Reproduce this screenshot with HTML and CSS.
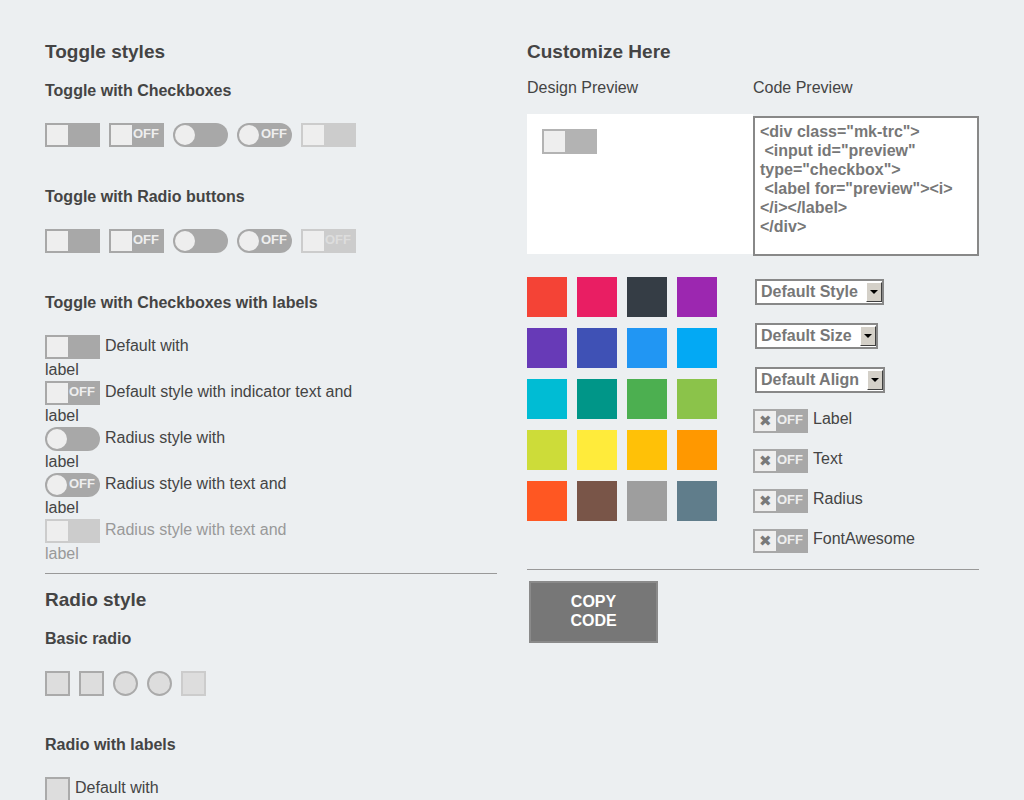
FILE: index.html
```html
<!DOCTYPE html>
<html>
<head>
<meta charset="utf-8">
<link rel="stylesheet" href="styles.css">
</head>
<body>
<div class="page">
  <div class="col">
    <h2 class="h2">Toggle styles</h2>
    <h3 class="h3">Toggle with Checkboxes</h3>
    <div class="trow">
      <span class="tg"><span class="kn"></span></span>
      <span class="tg"><span class="kn"></span><span class="off">OFF</span></span>
      <span class="tg rd"><span class="kn"></span></span>
      <span class="tg rd"><span class="kn"></span><span class="off">OFF</span></span>
      <span class="tg dis"><span class="kn"></span></span>
    </div>
    <h3 class="h3">Toggle with Radio buttons</h3>
    <div class="trow">
      <span class="tg"><span class="kn"></span></span>
      <span class="tg"><span class="kn"></span><span class="off">OFF</span></span>
      <span class="tg rd"><span class="kn"></span></span>
      <span class="tg rd"><span class="kn"></span><span class="off">OFF</span></span>
      <span class="tg dis"><span class="kn"></span><span class="off">OFF</span></span>
    </div>
    <h3 class="h3">Toggle with Checkboxes with labels</h3>
    <div class="lrows">
      <div class="lrow"><div class="l1"><span class="tg"><span class="kn"></span></span><span class="lt">Default with</span></div><div class="l2">label</div></div>
      <div class="lrow"><div class="l1"><span class="tg"><span class="kn"></span><span class="off">OFF</span></span><span class="lt">Default style with indicator text and</span></div><div class="l2">label</div></div>
      <div class="lrow"><div class="l1"><span class="tg rd"><span class="kn"></span></span><span class="lt">Radius style with</span></div><div class="l2">label</div></div>
      <div class="lrow"><div class="l1"><span class="tg rd"><span class="kn"></span><span class="off">OFF</span></span><span class="lt">Radius style with text and</span></div><div class="l2">label</div></div>
      <div class="lrow dimmed"><div class="l1"><span class="tg dis"><span class="kn"></span></span><span class="lt">Radius style with text and</span></div><div class="l2">label</div></div>
    </div>
    <div class="hr hr-left"></div>
    <h2 class="h2 h2-radio">Radio style</h2>
    <h3 class="h3">Basic radio</h3>
    <div class="rrow">
      <span class="rb"></span>
      <span class="rb"></span>
      <span class="rb rc"></span>
      <span class="rb rc"></span>
      <span class="rb rdis"></span>
    </div>
    <h3 class="h3">Radio with labels</h3>
    <div class="lrow"><div class="l1"><span class="rb"></span><span class="lt">Default with</span></div></div>
  </div>

  <div class="col">
    <h2 class="h2">Customize Here</h2>
    <div class="pv-heads">
      <div class="pv-label">Design Preview</div>
      <div class="pv-label">Code Preview</div>
    </div>
    <div class="pv">
      <div class="pv-design"><span class="tg pvt"><span class="kn"></span></span></div>
      <div class="pv-code"><div class="code">&lt;div class="mk-trc"&gt;
 &lt;input id="preview"
type="checkbox"&gt;
 &lt;label for="preview"&gt;&lt;i&gt;
&lt;/i&gt;&lt;/label&gt;
&lt;/div&gt;</div></div>
    </div>
    <div class="opts">
      <div class="swatches">
        <span class="sw" style="background:#f44336"></span>
        <span class="sw" style="background:#e91e63"></span>
        <span class="sw" style="background:#353d45"></span>
        <span class="sw" style="background:#9c27b0"></span>
        <span class="sw" style="background:#673ab7"></span>
        <span class="sw" style="background:#3f51b5"></span>
        <span class="sw" style="background:#2196f3"></span>
        <span class="sw" style="background:#03a9f4"></span>
        <span class="sw" style="background:#00bcd4"></span>
        <span class="sw" style="background:#009688"></span>
        <span class="sw" style="background:#4caf50"></span>
        <span class="sw" style="background:#8bc34a"></span>
        <span class="sw" style="background:#cddc39"></span>
        <span class="sw" style="background:#ffeb3b"></span>
        <span class="sw" style="background:#ffc107"></span>
        <span class="sw" style="background:#ff9800"></span>
        <span class="sw" style="background:#ff5722"></span>
        <span class="sw" style="background:#795548"></span>
        <span class="sw" style="background:#9e9e9e"></span>
        <span class="sw" style="background:#607d8b"></span>
      </div>
      <div class="controls">
        <div class="sel"><span class="sel-t">Default Style</span><span class="sel-b"><span class="arr"></span></span></div>
        <div class="sel"><span class="sel-t">Default Size</span><span class="sel-b"><span class="arr"></span></span></div>
        <div class="sel sel-last"><span class="sel-t">Default Align</span><span class="sel-b"><span class="arr"></span></span></div>
        <div class="xrow"><span class="tg"><span class="kn xk">✖</span><span class="off">OFF</span></span><span class="xt">Label</span></div>
        <div class="xrow"><span class="tg"><span class="kn xk">✖</span><span class="off">OFF</span></span><span class="xt">Text</span></div>
        <div class="xrow"><span class="tg"><span class="kn xk">✖</span><span class="off">OFF</span></span><span class="xt">Radius</span></div>
        <div class="xrow"><span class="tg"><span class="kn xk">✖</span><span class="off">OFF</span></span><span class="xt">FontAwesome</span></div>
      </div>
    </div>
    <div class="hr hr-right"></div>
    <div class="btn">COPY<br>CODE</div>
  </div>
</div>
</body>
</html>
```

FILE: styles.css
```css
html, body {
  margin: 0;
  padding: 0;
  overflow: hidden;
  background: #eceff1;
}
body {
  font-family: "Liberation Sans", Arial, sans-serif;
  color: #444;
}
.page {
  display: grid;
  grid-template-columns: 452px 452px;
  column-gap: 30px;
  align-items: start;
  padding: 41px 45px 0 45px;
  height: 759px;
}
.col {
  display: flex;
  flex-direction: column;
  align-items: flex-start;
}
.h2 {
  margin: 0;
  font-size: 19px;
  line-height: 22px;
  font-weight: bold;
  color: #444;
}
.h3 {
  margin: 18px 0 22px 0;
  font-size: 16px;
  line-height: 20px;
  font-weight: bold;
  color: #444;
}
.trow + .h3 {
  margin-top: 40px;
}
.rrow + .h3 {
  margin-top: 39px;
}
.trow {
  display: flex;
  gap: 9px;
}
.tg {
  box-sizing: border-box;
  display: flex;
  width: 55px;
  height: 24px;
  padding: 2px;
  background: #a8a8a8;
  flex: none;
}
.kn {
  width: 21px;
  height: 20px;
  background: #eeeeee;
  flex: none;
}
.off {
  margin-left: auto;
  margin-right: 3px;
  font-size: 13px;
  line-height: 17px;
  font-weight: bold;
  color: #eeeeee;
}
.tg.rd {
  border-radius: 12px;
}
.tg.rd .kn {
  width: 20px;
  border-radius: 50%;
}
.tg.dis {
  background: #cccccc;
}
.tg.dis .kn {
  background: #eeeeee;
}
.tg.dis .off {
  color: #dddddd;
}
.lrows {
  display: flex;
  flex-direction: column;
}
.lrow {
  display: flex;
  flex-direction: column;
  height: 46px;
  font-size: 16px;
}
.l1 {
  display: flex;
  align-items: flex-start;
  height: 24px;
}
.lt {
  margin-left: 5px;
  padding-top: 1px;
  line-height: 20px;
}
.l2 {
  line-height: 22px;
}
.dimmed {
  color: #999;
}
.hr {
  width: 100%;
  border-top: 1px solid #999;
}
.hr-left {
  margin-top: 8px;
}
.h2-radio {
  margin-top: 15px;
}
.rrow {
  display: flex;
  gap: 9px;
}
.rb {
  box-sizing: border-box;
  width: 25px;
  height: 25px;
  border: 2px solid #aaaaaa;
  background: #dddddd;
  flex: none;
}
.rb.rc {
  border-radius: 50%;
}
.rb.rdis {
  border-color: #cccccc;
}

/* right column */
.pv-heads {
  display: grid;
  grid-template-columns: 226px 226px;
  margin-top: 15px;
}
.pv-label {
  font-size: 16px;
  line-height: 20px;
  color: #444;
}
.pv {
  display: grid;
  grid-template-columns: 226px 226px;
  margin-top: 16px;
  align-items: start;
}
.pv-design {
  background: #ffffff;
  height: 140px;
  padding: 15px;
  box-sizing: border-box;
}
.tg.pvt {
  height: 25px;
  background: #b3b3b3;
}
.tg.pvt .kn {
  height: 21px;
}
.pv-code {
  box-sizing: border-box;
  height: 140px;
  margin-top: 2px;
  background: #fff;
  border: 2px solid #888;
  padding: 4px 5px;
}
.code {
  white-space: pre;
  font-size: 16px;
  line-height: 19px;
  font-weight: bold;
  color: #777;
}
.opts {
  display: grid;
  grid-template-columns: 226px 226px;
  align-items: start;
  margin-top: 21px;
}
.swatches {
  display: grid;
  grid-template-columns: repeat(4, 40px);
  grid-auto-rows: 40px;
  align-content: start;
  column-gap: 10px;
  row-gap: 11px;
}
.sw {
  width: 40px;
  height: 40px;
}
.controls {
  display: flex;
  flex-direction: column;
  align-items: flex-start;
}
.sel {
  box-sizing: border-box;
  display: flex;
  align-items: center;
  height: 26px;
  margin-left: 2px;
  margin-bottom: 18px;
  border: 2px solid #888;
  background: #fff;
  padding-left: 4px;
}
.sel:first-child {
  margin-top: 2px;
}
.sel.sel-last {
  margin-bottom: 16px;
}
.sel-t {
  font-size: 16px;
  font-weight: bold;
  color: #777;
  line-height: 20px;
}
.sel-b {
  box-sizing: border-box;
  display: flex;
  align-items: center;
  justify-content: center;
  width: 16px;
  height: 20px;
  margin-left: 8px;
  background: #d4d0c8;
  border-top: 1px solid #fff;
  border-left: 1px solid #fff;
  border-right: 1px solid #404040;
  border-bottom: 1px solid #404040;
}
.arr {
  width: 0;
  height: 0;
  border-left: 4px solid transparent;
  border-right: 4px solid transparent;
  border-top: 4px solid #000;
}
.xrow {
  display: flex;
  align-items: flex-start;
  height: 24px;
  margin-bottom: 16px;
}
.xk {
  display: flex;
  align-items: center;
  justify-content: center;
  font-size: 15px;
  color: #7a7a7a;
  line-height: 20px;
}
.xt {
  margin-left: 5px;
  font-size: 16px;
  line-height: 20px;
  color: #444;
}
.hr-right {
  margin-top: 0;
}
.btn {
  box-sizing: border-box;
  width: 129px;
  height: 62px;
  margin-top: 11px;
  margin-left: 2px;
  background: #777;
  border: 2px solid #8a8a8a;
  color: #fff;
  font-weight: bold;
  font-size: 16px;
  line-height: 19px;
  text-align: center;
  padding-top: 9px;
}
```
